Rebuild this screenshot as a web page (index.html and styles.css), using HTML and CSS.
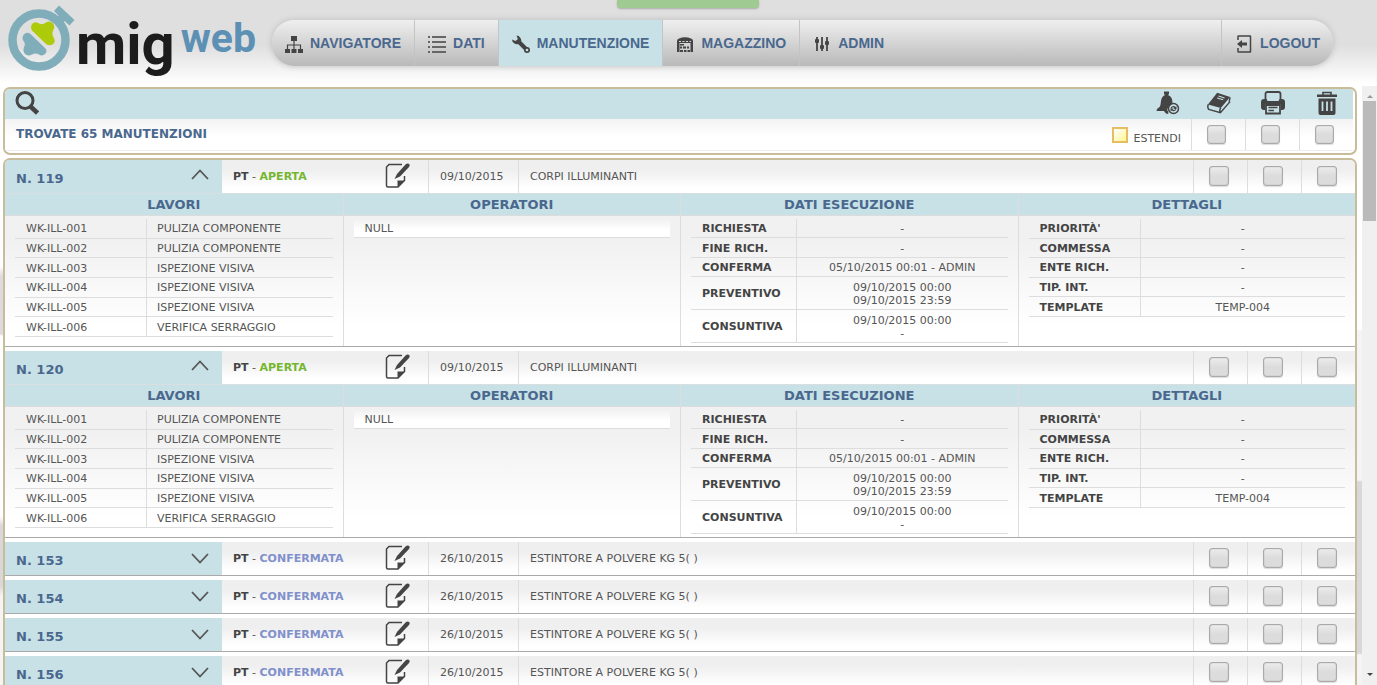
FILE: index.html
```html
<!DOCTYPE html>
<html lang="it">
<head>
<meta charset="utf-8">
<title>MIG Web - Manutenzione</title>
<link rel="stylesheet" href="styles.css">
</head>
<body>
<svg class="sprite" aria-hidden="true">
  <symbol id="i-tree" viewBox="0 0 18 18"><path d="M6 1h6v5H6zM0 14h5v4H0zM6.500 14h5v4h-5zM13 14h5v4h-5z"/><path d="M9 6v8M2.500 14V10h13v4" fill="none" stroke="currentColor" stroke-width="1.200"/></symbol>
  <symbol id="i-list" viewBox="0 0 18 18"><path fill="#666" d="M0 1h2v2H0zM4 1h14v2H4zM0 6h2v2H0zM4 6h14v2H4zM0 11h2v2H0zM4 11h14v2H4zM0 16h2v2H0zM4 16h14v2H4z"/></symbol>
  <symbol id="i-wrench" viewBox="0 0 18 18"><path d="M5 5 15 15" stroke="currentColor" stroke-width="4" fill="none"/><path d="M4.500.500A5 5 0 0 1 9 7L6.500 9A5 5 0 0 1 0 4.500L3.500 6 6 4.500z"/><circle cx="15" cy="15" r="3"/><circle cx="15" cy="15" r="1.300" fill="#c8e1e6"/></symbol>
  <symbol id="i-store" viewBox="0 0 18 18"><path d="M1 17V6Q1 4 3 3.500Q9 1 15 3.500Q17 4 17 6v11h-2.500V8h-11v9z"/><path d="M4 9h4v1.500H4zM4 11.500h2v2H4zM7 11.500h3v2H7zM4 15h3v2H4zM8 15h2.500v2H8zM11.500 15H14v2h-2.500zM11 11.500h2v2h-2z"/><path d="M3 6.500h12" stroke="#d8d8d8" stroke-dasharray="2 1.500"/></symbol>
  <symbol id="i-sliders" viewBox="0 0 18 18"><path d="M4 2v14M9 2v14M14 2v14" stroke="currentColor" stroke-width="1.800"/><rect x="2" y="4" width="4" height="4" rx="1"/><rect x="7" y="10" width="4" height="4" rx="1"/><rect x="12" y="6" width="4" height="4" rx="1"/></symbol>
  <symbol id="i-exit" viewBox="0 0 16 18"><path d="M2 5V1.500Q2 1 2.500 1H14q.500 0 .500.500v15q0 .500-.500.500H2.500Q2 17 2 16.500V13" fill="none" stroke="currentColor" stroke-width="1.500"/><path d="M1 9l5-4v2.500h5v3H6V13z"/></symbol>
  <symbol id="i-search" viewBox="0 0 24 24"><circle cx="10" cy="9.500" r="8" fill="none" stroke="currentColor" stroke-width="3"/><path d="M15.500 15.500 22.500 22" stroke="currentColor" stroke-width="4.500"/></symbol>
  <symbol id="i-bell" viewBox="0 0 24 24"><path d="M8 .500h5V3l-1 1c4 1.500 4.500 5 4.500 9a6 6 0 0 0-5 7H.500L1 18l3-2.500C5.500 12 4 6 9 4L8 3z"/><path d="M8 20h4l.500 2.500Q10 24 8 20z"/><circle cx="17.500" cy="17.500" r="5" fill="none" stroke="currentColor" stroke-width="1.500"/><path d="M14.500 17q2-3.500 5.500-1l.500-1v3h-3l1-1q-1.500-1.500-3 .500zM20.500 18q-2 3.500-5 1.500l-1 1v-3h3l-1 1q2 1 3-.500z"/></symbol>
  <symbol id="i-book" viewBox="0 0 26 24"><path d="M11 1 25 5.500 15 17.500 1 13.500z"/><path d="M12.500 4.500 19 6.500M11 6.500 17.500 8.500" stroke="#c8e1e6" stroke-width="1.200"/><path d="M1.500 13.500Q0 16.500 2 19L14.500 22.500 25 10.500M25 6l-1 4.500M15 17.500q-2 2-.500 5" fill="none" stroke="currentColor" stroke-width="1.600"/></symbol>
  <symbol id="i-print" viewBox="0 0 24 24"><path d="M4.500 9V3Q4.500 1 6.500 1h11Q19.500 1 19.500 3v6" fill="none" stroke="currentColor" stroke-width="1.800"/><path d="M3 8h2.500l1 2h11l1-2H21q3 0 3 3v5q0 3-3 3h-1v-6H4v6H3q-3 0-3-3v-5Q0 8 3 8z"/><path d="M5 14h14v8.500H5z" fill="none" stroke="currentColor" stroke-width="1.800"/><path d="M7.500 16.500h9M7.500 19.500H13" stroke="currentColor" stroke-width="1.300"/></symbol>
  <symbol id="i-trash" viewBox="0 0 22 24"><path d="M7 4V1.500h8V4" fill="none" stroke="currentColor" stroke-width="1.600"/><path d="M1 3.500h20V6H1z"/><path d="M2.500 7.500h17V22q0 2-2 2h-13q-2 0-2-2z"/><path d="M6.500 10.500V20M11 10.500V20M15.500 10.500V20" stroke="#c8e1e6" stroke-width="1.800"/></symbol>
  <symbol id="i-edit" viewBox="0 0 25 25"><path d="M17 1.500H4L1.500 4v18.500q0 1.500 1.500 1.500h10l6.500-6.500V13" fill="none" stroke="currentColor" stroke-width="1.500"/><path d="M12.500 24v-6.500h7z"/><path d="M12 11 20.500 1.500q2.500-2 4 0 .500 1-.500 2.500L15 13.500 9.500 16z"/></symbol>
  <symbol id="i-up" viewBox="0 0 18 11"><path d="M1 10 9 1.500 17 10" fill="none" stroke="currentColor" stroke-width="1.800"/></symbol>
  <symbol id="i-down" viewBox="0 0 18 11"><path d="M1 1 9 9.500 17 1" fill="none" stroke="currentColor" stroke-width="1.800"/></symbol>
</svg>
<div class="notice"></div>
<header class="top">
  <a class="logo" href="#" aria-label="mig web">
    <svg class="mark" viewBox="0 0 68 68" aria-hidden="true">
      <circle cx="31" cy="36" r="26.500" fill="none" stroke="#80adba" stroke-width="8.500"/>
      <path d="M46 7 51 1.500 66.500 16 61.500 21.500 56.500 17 53 21 47 15.500 50.500 11.500z" fill="#80adba"/>
      <path d="M24 20q3-3 6-1 4 2.500 8-.500 3-2 6.500.500 3 3 1 6.500-2 4 0 8 3 4-1 7-4 2-7-1L24 26.500q-2-3 0-6.500z" fill="#aecb0b"/>
      <path d="M15.500 31q3-4 7-1L37 44q3 3 0 6-3 2.500-6 .500-3.500-2-7 0-4 2-7-.500-2.500-3-1-7 2-3-.500-6-2-3 0-6z" fill="#80adba"/>
    </svg>
    <span class="mig">mig</span><span class="web">web</span>
  </a>
  <nav class="menu">
    <a href="#"><svg class="ico"><use href="#i-tree"/></svg>NAVIGATORE</a>
    <a href="#"><svg class="ico"><use href="#i-list"/></svg>DATI</a>
    <a href="#" class="active"><svg class="ico"><use href="#i-wrench"/></svg>MANUTENZIONE</a>
    <a href="#"><svg class="ico"><use href="#i-store"/></svg>MAGAZZINO</a>
    <a href="#"><svg class="ico"><use href="#i-sliders"/></svg>ADMIN</a>
    <a href="#" class="logout"><svg class="ico"><use href="#i-exit"/></svg>LOGOUT</a>
  </nav>
</header>
<div class="stage">
<main class="content">
  <section class="panel finder">
    <div class="tools">
      <button class="tool search" aria-label="Cerca"><svg><use href="#i-search"/></svg></button>
      <button class="tool bell" aria-label="Avvisi"><svg><use href="#i-bell"/></svg></button>
      <button class="tool" aria-label="Registro"><svg><use href="#i-book"/></svg></button>
      <button class="tool" aria-label="Stampa"><svg><use href="#i-print"/></svg></button>
      <button class="tool" aria-label="Elimina"><svg><use href="#i-trash"/></svg></button>
    </div>
    <div class="summary">
      <h1>TROVATE 65 MANUTENZIONI</h1>
      <label class="extend"><input type="checkbox">ESTENDI</label>
      <label class="pick"><input type="checkbox" aria-label="Registro, tutte"></label>
      <label class="pick"><input type="checkbox" aria-label="Stampa, tutte"></label>
      <label class="pick"><input type="checkbox" aria-label="Elimina, tutte"></label>
    </div>
  </section>

  <section class="panel list">
    <article class="job">
      <div class="row">
        <button class="num">N. 119<svg><use href="#i-up"/></svg></button>
        <div class="status"><span><b>PT</b> - <b class="open">APERTA</b></span><button class="edit" aria-label="Modifica"><svg><use href="#i-edit"/></svg></button></div>
        <div class="date">09/10/2015</div><div class="desc">CORPI ILLUMINANTI</div>
        <label class="pick"><input type="checkbox" aria-label="Registro 119"></label><label class="pick"><input type="checkbox" aria-label="Stampa 119"></label><label class="pick"><input type="checkbox" aria-label="Elimina 119"></label>
      </div>
      <div class="heads"><h2>LAVORI</h2><h2>OPERATORI</h2><h2>DATI ESECUZIONE</h2><h2>DETTAGLI</h2></div>
      <div class="detail">
        <div><table class="works">
          <tr><td>WK-ILL-001</td><td>PULIZIA COMPONENTE</td></tr>
          <tr><td>WK-ILL-002</td><td>PULIZIA COMPONENTE</td></tr>
          <tr><td>WK-ILL-003</td><td>ISPEZIONE VISIVA</td></tr>
          <tr><td>WK-ILL-004</td><td>ISPEZIONE VISIVA</td></tr>
          <tr><td>WK-ILL-005</td><td>ISPEZIONE VISIVA</td></tr>
          <tr><td>WK-ILL-006</td><td>VERIFICA SERRAGGIO</td></tr>
        </table></div>
        <div><p class="operator">NULL</p></div>
        <div><table class="facts runs">
          <tr><th>RICHIESTA</th><td>-</td></tr>
          <tr><th>FINE RICH.</th><td>-</td></tr>
          <tr><th>CONFERMA</th><td>05/10/2015 00:01 - ADMIN</td></tr>
          <tr><th>PREVENTIVO</th><td>09/10/2015 00:00<br>09/10/2015 23:59</td></tr>
          <tr><th>CONSUNTIVA</th><td>09/10/2015 00:00<br>-</td></tr>
        </table></div>
        <div><table class="facts extras">
          <tr><th>PRIORITÀ'</th><td>-</td></tr>
          <tr><th>COMMESSA</th><td>-</td></tr>
          <tr><th>ENTE RICH.</th><td>-</td></tr>
          <tr><th>TIP. INT.</th><td>-</td></tr>
          <tr><th>TEMPLATE</th><td>TEMP-004</td></tr>
        </table></div>
      </div>
    </article>
    <article class="job">
      <div class="row">
        <button class="num">N. 120<svg><use href="#i-up"/></svg></button>
        <div class="status"><span><b>PT</b> - <b class="open">APERTA</b></span><button class="edit" aria-label="Modifica"><svg><use href="#i-edit"/></svg></button></div>
        <div class="date">09/10/2015</div><div class="desc">CORPI ILLUMINANTI</div>
        <label class="pick"><input type="checkbox" aria-label="Registro 120"></label><label class="pick"><input type="checkbox" aria-label="Stampa 120"></label><label class="pick"><input type="checkbox" aria-label="Elimina 120"></label>
      </div>
      <div class="heads"><h2>LAVORI</h2><h2>OPERATORI</h2><h2>DATI ESECUZIONE</h2><h2>DETTAGLI</h2></div>
      <div class="detail">
        <div><table class="works">
          <tr><td>WK-ILL-001</td><td>PULIZIA COMPONENTE</td></tr>
          <tr><td>WK-ILL-002</td><td>PULIZIA COMPONENTE</td></tr>
          <tr><td>WK-ILL-003</td><td>ISPEZIONE VISIVA</td></tr>
          <tr><td>WK-ILL-004</td><td>ISPEZIONE VISIVA</td></tr>
          <tr><td>WK-ILL-005</td><td>ISPEZIONE VISIVA</td></tr>
          <tr><td>WK-ILL-006</td><td>VERIFICA SERRAGGIO</td></tr>
        </table></div>
        <div><p class="operator">NULL</p></div>
        <div><table class="facts runs">
          <tr><th>RICHIESTA</th><td>-</td></tr>
          <tr><th>FINE RICH.</th><td>-</td></tr>
          <tr><th>CONFERMA</th><td>05/10/2015 00:01 - ADMIN</td></tr>
          <tr><th>PREVENTIVO</th><td>09/10/2015 00:00<br>09/10/2015 23:59</td></tr>
          <tr><th>CONSUNTIVA</th><td>09/10/2015 00:00<br>-</td></tr>
        </table></div>
        <div><table class="facts extras">
          <tr><th>PRIORITÀ'</th><td>-</td></tr>
          <tr><th>COMMESSA</th><td>-</td></tr>
          <tr><th>ENTE RICH.</th><td>-</td></tr>
          <tr><th>TIP. INT.</th><td>-</td></tr>
          <tr><th>TEMPLATE</th><td>TEMP-004</td></tr>
        </table></div>
      </div>
    </article>
    <article class="job">
      <div class="row">
        <button class="num">N. 153<svg><use href="#i-down"/></svg></button>
        <div class="status"><span><b>PT</b> - <b class="confirmed">CONFERMATA</b></span><button class="edit" aria-label="Modifica"><svg><use href="#i-edit"/></svg></button></div>
        <div class="date">26/10/2015</div><div class="desc">ESTINTORE A POLVERE KG 5( )</div>
        <label class="pick"><input type="checkbox" aria-label="Registro 153"></label><label class="pick"><input type="checkbox" aria-label="Stampa 153"></label><label class="pick"><input type="checkbox" aria-label="Elimina 153"></label>
      </div>
    </article>
    <article class="job">
      <div class="row">
        <button class="num">N. 154<svg><use href="#i-down"/></svg></button>
        <div class="status"><span><b>PT</b> - <b class="confirmed">CONFERMATA</b></span><button class="edit" aria-label="Modifica"><svg><use href="#i-edit"/></svg></button></div>
        <div class="date">26/10/2015</div><div class="desc">ESTINTORE A POLVERE KG 5( )</div>
        <label class="pick"><input type="checkbox" aria-label="Registro 154"></label><label class="pick"><input type="checkbox" aria-label="Stampa 154"></label><label class="pick"><input type="checkbox" aria-label="Elimina 154"></label>
      </div>
    </article>
    <article class="job">
      <div class="row">
        <button class="num">N. 155<svg><use href="#i-down"/></svg></button>
        <div class="status"><span><b>PT</b> - <b class="confirmed">CONFERMATA</b></span><button class="edit" aria-label="Modifica"><svg><use href="#i-edit"/></svg></button></div>
        <div class="date">26/10/2015</div><div class="desc">ESTINTORE A POLVERE KG 5( )</div>
        <label class="pick"><input type="checkbox" aria-label="Registro 155"></label><label class="pick"><input type="checkbox" aria-label="Stampa 155"></label><label class="pick"><input type="checkbox" aria-label="Elimina 155"></label>
      </div>
    </article>
    <article class="job">
      <div class="row">
        <button class="num">N. 156<svg><use href="#i-down"/></svg></button>
        <div class="status"><span><b>PT</b> - <b class="confirmed">CONFERMATA</b></span><button class="edit" aria-label="Modifica"><svg><use href="#i-edit"/></svg></button></div>
        <div class="date">26/10/2015</div><div class="desc">ESTINTORE A POLVERE KG 5( )</div>
        <label class="pick"><input type="checkbox" aria-label="Registro 156"></label><label class="pick"><input type="checkbox" aria-label="Stampa 156"></label><label class="pick"><input type="checkbox" aria-label="Elimina 156"></label>
      </div>
    </article>
  </section>
</main>
<div class="scroll" aria-hidden="true"><i class="arrow up"></i><div class="thumb"></div><i class="arrow down"></i></div>
</div>
</body>
</html>
```
FILE: styles.css
```css
* { box-sizing: border-box; }
body {
  margin: 0;
  height: 100vh;
  overflow: hidden;
  display: flex;
  flex-direction: column;
  background: #fff;
  color: #555;
  font: 11px/13px Verdana, "DejaVu Sans", sans-serif;
}
button { border: 0; background: none; padding: 0; margin: 0; font: inherit; color: inherit; }
h1, h2, p { margin: 0; }
svg { display: block; fill: currentColor; color: #444; }
.sprite { position: absolute; width: 0; height: 0; }
.notice {
  position: absolute;
  top: 0;
  left: 50%;
  width: 142px;
  height: 8px;
  margin-left: -72px;
  border-radius: 0 0 4px 4px;
  background: #9fca91;
  box-shadow: 0 1px 2px #aaa;
}

.top {
  flex: none;
  height: 86px;
  display: flex;
  align-items: flex-start;
  padding: 0 44px 0 8px;
  background: linear-gradient(#dfdfdf 45px, #fff 84px);
}
.logo { display: flex; width: 264px; text-decoration: none; font-family: Roboto, sans-serif; font-weight: 700; }
.mark { width: 68px; height: 72px; padding-top: 4px; }
.mig { font-size: 58px; line-height: 88px; color: #1c1c1c; }
.web { font-size: 41px; line-height: 76px; color: #5c90b4; margin-left: 6px; }
.menu {
  flex: 1;
  height: 46px;
  margin-top: 20px;
  display: flex;
  border-radius: 22px;
  background: linear-gradient(#efefef, #b9b9b9);
  box-shadow: 0 0 6px #bbb;
  overflow: hidden;
}
.menu a {
  display: flex;
  align-items: center;
  gap: 7px;
  padding: 0 13px;
  border-right: 1px solid #c4c4c4;
  color: #4a688e;
  text-decoration: none;
  font: bold 14px/18px "Liberation Sans", Arial, sans-serif;
}
.menu a:nth-child(5) { border-right: 0; }
.menu .active { background: #c8e1e6; }
.menu .logout { margin-left: auto; border-right: 0; border-left: 1px solid #c4c4c4; }
.ico { width: 18px; height: 18px; margin-top: 2px; }

.stage {
  flex: 1;
  min-height: 0;
  display: flex;
  background:
    linear-gradient(#fff 180px, #dcdcdc 190px, #dcdcdc 248px, #fff 250px, #fff 430px, #d8d8d8 440px, #d8d8d8 500px, #f4f4f4 510px) left / 3px 100% no-repeat,
    linear-gradient(#fff 243px, #f4f4f4 245px, #f4f4f4 394px, #d8d8d8 396px, #d8d8d8 567px, #f4f4f4 569px);
}
.content { flex: 1; min-width: 0; padding: 1px 5px 0 3px; overflow: hidden; }
.panel { border: 2px solid #c8bd98; border-radius: 7px; background: #fff; overflow: hidden; }
.finder { margin-bottom: 3px; padding: 0 2px 2px 0; }
.tools { display: flex; height: 30px; background: #c8e1e6; }
.tool { width: 54px; display: flex; justify-content: center; align-items: center; padding: 0 0 2px 2px; }
.tool svg { width: 24px; height: 24px; }
.tool.search { width: 44px; margin-right: auto; padding-left: 0; }
.tool.bell { width: 46px; padding-left: 0; }
.summary { display: flex; height: 32px; background: linear-gradient(#f3f3f3, #fff 60%); border-bottom: 1px solid #eee; }
h1 { flex: 1; padding: 8px 11px; font-size: 12px; line-height: 14px; color: #4a688e; }
.extend { display: flex; align-items: flex-start; gap: 5px; padding: 8px 10px 0 0; line-height: 24px; }
.pick { width: 54px; flex: none; display: flex; justify-content: center; align-items: center; border-left: 1px solid #ddd; padding: 0 4px 2px 0; }
.pick input, .extend input { appearance: none; margin: 0; }
.pick input { width: 20px; height: 20px; border: 1px solid #aaa; border-radius: 3px; background: linear-gradient(#ececec, #dcdcdc 50%); box-shadow: inset 0 0 1px #888, 0 1px 1px #ddd; }
.summary .pick { padding-bottom: 0; }
.summary .pick input { width: 19px; height: 19px; }
.extend input { width: 16px; height: 16px; border: 2px solid #e6bd62; background: linear-gradient(135deg, #fff, #fff68f); }

.list { border-radius: 7px 7px 0 0; min-height: 600px; }
.job { border-bottom: 1px solid #aaa; margin-bottom: 4px; }
.row { display: flex; height: 33px; background: linear-gradient(#efefef 30%, #fff 85%); }
.num { width: 217px; display: flex; align-items: center; justify-content: space-between; padding: 4px 13px 0 11px; background: #c8e1e6; color: #4a688e; font-weight: 700; font-size: 13px; }
.num svg { width: 18px; height: 11px; margin-bottom: 9px; color: #555; }
.row:only-child .num svg { margin-bottom: 4px; }
.status { width: 206px; display: flex; align-items: center; justify-content: space-between; padding: 0 18px 0 11px; }
.status b { color: #444; }
.status .open { color: #74b62f; }
.status .confirmed { color: #8090cb; }
.edit { padding-bottom: 2px; }
.edit svg { width: 25px; height: 25px; }
.date, .desc { padding: 0 11px; line-height: 33px; border-left: 1px solid #ddd; }
.date { width: 90px; }
.desc { flex: 1; }
.heads, .detail { display: grid; grid-template-columns: repeat(4, minmax(0, 1fr)); }
.heads { background: #c8e1e6; }
h2 { height: 23px; border-top: 1px solid #d9dfe0; border-bottom: 1px solid #dcdcdc; font-size: 13px; line-height: 22px; text-align: center; color: #4a688e; }
.detail { min-height: 130px; background: linear-gradient(#f1f1f1 20%, #fff 85%); }
.detail > div { padding: 3px 10px 0; }
.heads h2 + h2, .detail > div + div { border-left: 1px solid #ddd; }
table { width: 100%; border-spacing: 0; table-layout: fixed; }
td, th { padding: 3px 11px 2px; border-bottom: 1px solid #ddd; text-align: left; white-space: nowrap; color: #555; }
th { color: #444; }
td + td, th + td { border-left: 1px solid #ddd; }
td + td { padding-left: 10px; }
.works { height: 118px; }
.works td:first-child { width: 131px; }
.facts td { text-align: center; }
.runs { height: 124px; }
.runs th { width: 105px; }
.extras { height: 98px; }
.extras th { width: 111px; }
.operator { padding: 3px 11px 2px; border-bottom: 1px solid #ddd; background: linear-gradient(#f1f1f1, #fff 60%); }

.scroll { width: 15px; display: flex; flex-direction: column; align-items: center; background: #f0f0f0; }
.thumb { width: 13px; height: 120px; margin-bottom: auto; background: #bababa; }
.arrow { width: 6px; border: 3px solid transparent; }
.up { height: 12px; margin-bottom: 3px; border-bottom-color: #999; border-top-width: 6px; }
.down { height: 12px; border-top-color: #444; }
```
